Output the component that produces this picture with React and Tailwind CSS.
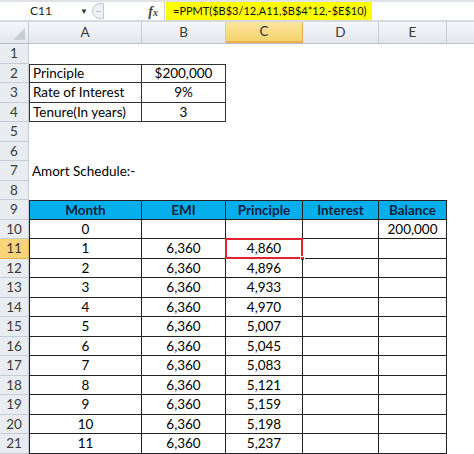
import React from "react";

const cols = [
  { key: "A", w: "w-[113px]" },
  { key: "B", w: "w-[84px]" },
  { key: "C", w: "w-[77px]" },
  { key: "D", w: "w-[76px]" },
  { key: "E", w: "w-[68px]" },
  { key: "", w: "w-[60px]" },
];

const schedule = [
  ["1", "6,360", "4,860"],
  ["2", "6,360", "4,896"],
  ["3", "6,360", "4,933"],
  ["4", "6,360", "4,970"],
  ["5", "6,360", "5,007"],
  ["6", "6,360", "5,045"],
  ["7", "6,360", "5,083"],
  ["8", "6,360", "5,121"],
  ["9", "6,360", "5,159"],
  ["10", "6,360", "5,198"],
  ["11", "6,360", "5,237"],
];

const RowHead = ({ n, active }) => (
  <div
    className={`w-[29px] shrink-0 h-full flex items-center justify-center border-b border-r text-[13.5px] ${
      active
        ? "bg-[#f8d577] border-[#e2b34f] text-[#333]"
        : "bg-[#e9ecf1] border-[#c6ccd5] text-[#3a3a3a]"
    }`}
  >
    {n}
  </div>
);

const Cell = ({ w, children, cls = "" }) => (
  <div className={`${w} shrink-0 h-full flex items-center ${cls}`}>{children}</div>
);

const App = () => {
  const blank = (n) => (
    <div key={n} className="flex h-[19.5px]">
      <RowHead n={n} />
    </div>
  );

  return (
    <div
      className="w-[474px] h-[454px] overflow-hidden bg-white text-black"
      style={{ fontFamily: "Lato, 'Open Sans', sans-serif" }}
    >
      {/* formula bar */}
      <div className="h-[22px] flex items-stretch bg-white border-t-2 border-[#dfe3e8] border-b-2 border-b-[#d5dae1]">
        <div className="w-[92px] flex items-center pl-[30px] text-[12px] text-[#222]">
          <span className="flex-1">C11</span>
          <span className="text-[8px] mr-[4px] text-[#333]">▼</span>
        </div>
        <div className="w-[14px] flex items-center">
          <div className="w-[12px] h-[16px] rounded-l-full border border-[#c3c8cf] bg-[#eef0f3] flex items-center justify-center">
            <div className="w-[5px] h-[1px] bg-[#b9bec6]" />
          </div>
        </div>
        <div className="w-[58px] flex items-center justify-end pr-[6px] bg-white">
          <span
            className="text-[14px] italic font-bold text-[#444]"
            style={{ fontFamily: "'Liberation Serif', serif" }}
          >
            f<span className="text-[10px]">x</span>
          </span>
        </div>
        <div className="flex-1 flex items-center border-l border-[#c9ced6] pl-[1px]">
          <div className="h-[18px] w-[206px] pl-[7px] flex items-center whitespace-nowrap bg-[#ffff00] text-[11px] text-[#111]">
            =PPMT($B$3/12,A11,$B$4*12,-$E$10)
          </div>
        </div>
      </div>

      {/* column headers */}
      <div className="flex h-[22px] bg-gradient-to-b from-[#f5f7fa] to-[#e3e7ec] border-b border-[#b8bfc9]">
        <div className="w-[29px] shrink-0 border-r border-[#c6ccd5] relative">
          <div className="absolute right-[3px] bottom-[3px] w-0 h-0 border-l-[12px] border-l-transparent border-b-[12px] border-b-[#c9ced6]" />
        </div>
        {cols.map((c) => (
          <div
            key={c.w + c.key}
            className={`${c.w} shrink-0 flex items-center justify-center text-[13.5px] border-r ${
              c.key === "C"
                ? "bg-gradient-to-b from-[#fbe5a0] to-[#f7d26b] border-[#e1b04c] text-[#333] border-b-2 border-b-[#eab04a]"
                : "border-[#c6ccd5] text-[#3a3a3a]"
            }`}
          >
            {c.key}
          </div>
        ))}
      </div>

      {blank(1)}

      {/* input table */}
      {[
        ["Principle", "$200,000"],
        ["Rate of Interest", "9%"],
        ["Tenure(In years)", "3"],
      ].map(([label, val], i) => (
        <div key={label} className="flex h-[19.5px] text-[13.5px]">
          <RowHead n={i + 2} />
          <Cell
            w="w-[113px]"
            cls={`pl-[3px] border-l border-r border-b border-[#333] ${i === 0 ? "border-t" : ""}`}
          >
            {label}
          </Cell>
          <Cell
            w="w-[84px]"
            cls={`justify-center border-r border-b border-[#333] ${i === 0 ? "border-t" : ""}`}
          >
            {val}
          </Cell>
        </div>
      ))}

      {blank(5)}
      {blank(6)}
      <div className="flex h-[19.5px] text-[13.5px]">
        <RowHead n={7} />
        <Cell w="w-[200px]" cls="pl-[3px]">
          Amort Schedule:-
        </Cell>
      </div>
      {blank(8)}

      {/* schedule header */}
      <div className="flex h-[19.5px] text-[13.5px]">
        <RowHead n={9} />
        {["Month", "EMI", "Principle", "Interest", "Balance"].map((h, i) => (
          <Cell
            key={h}
            w={cols[i].w}
            cls={`justify-center font-bold text-[#0d2240] bg-[#06afec] border-t border-r border-b border-[#222] ${
              i === 0 ? "border-l" : ""
            }`}
          >
            {h}
          </Cell>
        ))}
      </div>

      <div className="flex h-[19.5px] text-[13.5px]">
        <RowHead n={10} />
        <Cell w="w-[113px]" cls="justify-center border-l border-r border-b border-[#222]">
          0
        </Cell>
        <Cell w="w-[84px]" cls="border-r border-b border-[#222]" />
        <Cell w="w-[77px]" cls="border-r border-b border-[#222]" />
        <Cell w="w-[76px]" cls="border-r border-b border-[#222]" />
        <Cell w="w-[68px]" cls="justify-center border-r border-b border-[#222]">
          200,000
        </Cell>
      </div>

      {schedule.map(([m, emi, p], i) => (
        <div key={m} className="flex h-[19.5px] text-[13.5px]">
          <RowHead n={i + 11} active={i === 0} />
          <Cell w="w-[113px]" cls="justify-center border-l border-r border-b border-[#222]">
            {m}
          </Cell>
          <Cell w="w-[84px]" cls="justify-center border-r border-b border-[#222]">
            {emi}
          </Cell>
          <Cell w="w-[77px]" cls="justify-center border-r border-b border-[#222] relative">
            {p}
            {i === 0 && (
              <>
                <div className="absolute left-[-1px] top-[-1px] right-[-1px] bottom-[-1px] border-2 border-[#e3242b]" />
                <div className="absolute right-[-3px] bottom-[-3px] w-[5px] h-[5px] bg-[#e3242b] border border-white" />
              </>
            )}
          </Cell>
          <Cell w="w-[76px]" cls="border-r border-b border-[#222]" />
          <Cell w="w-[68px]" cls="border-r border-b border-[#222]" />
        </div>
      ))}
    </div>
  );
};

export default App;
